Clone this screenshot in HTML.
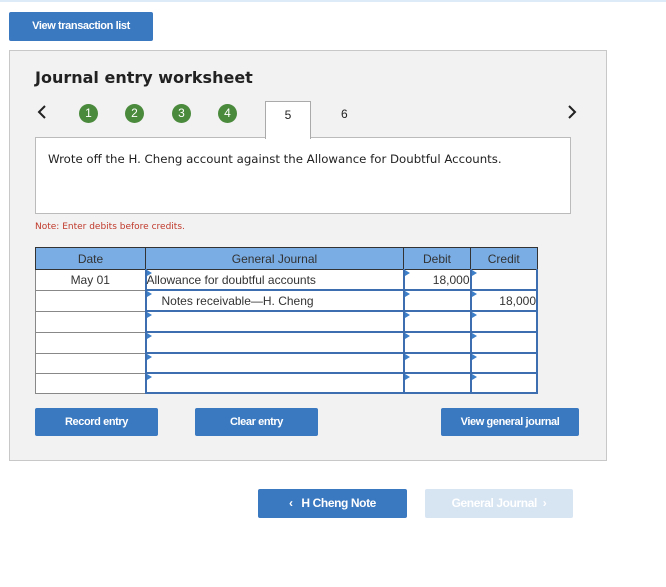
<!DOCTYPE html><html><head><style>
body{margin:0;width:666px;height:587px;background:#fff;font-family:"Liberation Sans",sans-serif;position:relative;overflow:hidden}
.a{position:absolute}
.btn{position:absolute;background:#3a78bf;color:#fff;font-weight:bold;font-size:11px;text-align:center;border-radius:2px;letter-spacing:-0.4px}
.c{position:absolute;width:19px;height:19px;border-radius:50%;background:#4a8a3c;color:#fff;font-size:12px;text-align:center;line-height:19px}
td{border:1px solid #888;padding:0;height:18px;font-size:12px;color:#333;line-height:16px}
tr.t td{height:19px}
.in{border:2px solid #3d6fb0;border-top-width:1px;position:relative}
.in:before{content:"";position:absolute;left:0;top:0;border-left:5px solid #3d7fc8;border-top:3px solid transparent;border-bottom:3px solid transparent}
</style></head><body>
<div class="a" style="left:0;top:0;width:666px;height:2px;background:#dcebf7"></div>
<div class="btn" style="left:9px;top:12px;width:144px;height:29px;line-height:29px">View transaction list</div>
<div class="a" style="left:9px;top:50px;width:596px;height:409px;background:#f2f2f2;border:1px solid #c8c8c8"></div>
<div class="a" style="left:35px;top:68px;font-family:'DejaVu Sans',sans-serif;font-weight:bold;font-size:16px;color:#222">Journal entry worksheet</div>
<svg class="a" style="left:37px;top:105px" width="10" height="14"><path d="M8 1L2 7L8 13" stroke="#222" stroke-width="2" fill="none"/></svg>
<svg class="a" style="left:567px;top:105px" width="10" height="14"><path d="M2 1L8 7L2 13" stroke="#222" stroke-width="2" fill="none"/></svg>
<div class="c" style="left:79px;top:104px">1</div>
<div class="c" style="left:125px;top:104px">2</div>
<div class="c" style="left:172px;top:104px">3</div>
<div class="c" style="left:218px;top:104px">4</div>
<div class="a" style="left:265px;top:101px;width:44px;height:37px;background:#fff;border:1px solid #aaa;border-bottom:none;text-align:center;line-height:26px;font-size:12px;color:#222;z-index:2">5</div>
<div class="a" style="left:341px;top:107px;font-size:12px;color:#222">6</div>
<div class="a" style="left:35px;top:137px;width:534px;height:75px;background:#fff;border:1px solid #bbb"></div>
<div class="a" style="left:48px;top:152px;font-family:'DejaVu Sans',sans-serif;font-size:11.75px;color:#222">Wrote off the H. Cheng account against the Allowance for Doubtful Accounts.</div>
<div class="a" style="left:35px;top:222px;font-family:'DejaVu Sans',sans-serif;font-size:9px;color:#c0392b">Note: Enter debits before credits.</div>
<table class="a" style="left:35px;top:247px;border-collapse:collapse;width:503px;background:#fff">
<tr style="background:#7aade4"><td style="width:109px;text-align:center;height:21px;border-color:#333">Date</td><td style="width:257px;text-align:center;border-color:#333">General Journal</td><td style="width:66px;text-align:center;border-color:#333">Debit</td><td style="text-align:center;border-color:#333">Credit</td></tr>
<tr class="t"><td style="text-align:center">May 01</td><td class="in">Allowance for doubtful accounts</td><td class="in" style="text-align:right">18,000</td><td class="in"></td></tr>
<tr class="t"><td></td><td class="in" style="padding-left:15px">Notes receivable—H. Cheng</td><td class="in"></td><td class="in" style="text-align:right">18,000</td></tr>
<tr class="t"><td></td><td class="in"></td><td class="in"></td><td class="in"></td></tr>
<tr class="t"><td></td><td class="in"></td><td class="in"></td><td class="in"></td></tr>
<tr><td></td><td class="in"></td><td class="in"></td><td class="in"></td></tr>
<tr><td></td><td class="in"></td><td class="in"></td><td class="in"></td></tr>
</table>
<div class="btn" style="left:35px;top:408px;width:123px;height:28px;line-height:28px">Record entry</div>
<div class="btn" style="left:195px;top:408px;width:123px;height:28px;line-height:28px">Clear entry</div>
<div class="btn" style="left:441px;top:408px;width:138px;height:28px;line-height:28px">View general journal</div>
<div class="btn" style="left:258px;top:489px;width:149px;height:29px;line-height:29px;font-size:12px">&lsaquo;&nbsp;&nbsp; H Cheng Note</div>
<div class="btn" style="left:425px;top:489px;width:148px;height:29px;line-height:29px;font-size:12px;background:#d7e4f2">General Journal &nbsp;&rsaquo;</div>
</body></html>
